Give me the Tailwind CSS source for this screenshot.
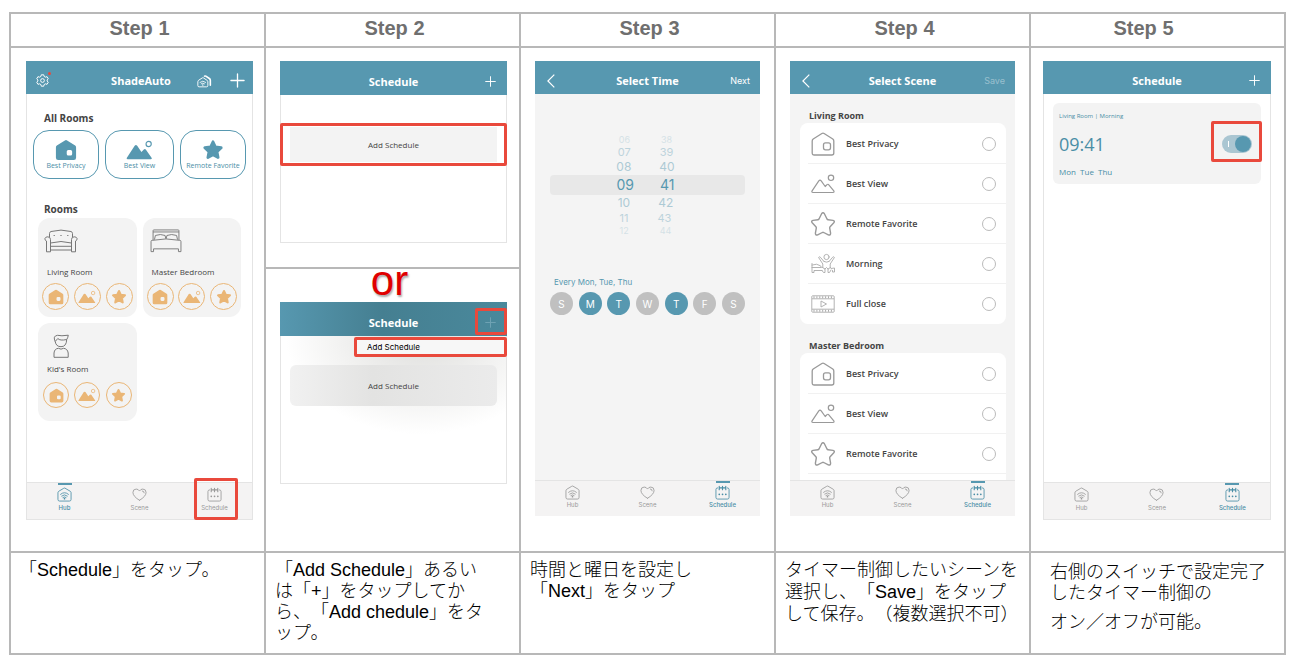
<!DOCTYPE html>
<html lang="ja">
<head>
    <meta charset="UTF-8">
    <meta name="viewport" content="width=device-width, initial-scale=1.0">
    <title>ShadeAuto - Schedule</title>
    <script src="https://cdn.jsdelivr.net/npm/@tailwindcss/browser@4"></script>
</head>
<body class="bg-white font-['Open_Sans','Noto_Sans_CJK_JP',sans-serif]">
    <!-- Icons -->
    <svg class="hidden">
        <symbol id="privacy" viewBox="0 0 24 24">
            <path fill="currentColor" fill-rule="evenodd" d="M10.800 1.500Q12 .7 13.200 1.500L22 7.200Q23 8 23 9.200V20.500Q23 23 20.500 23H3.500Q1 23 1 20.500V9.200Q1 8 2 7.200ZM14.500 12Q12.800 12 12.800 13.700V16.300Q12.800 18 14.500 18H17Q18.700 18 18.700 16.300V13.700Q18.700 12 17 12Z"/>
        </symbol>
        <symbol id="view" viewBox="0 0 28 20">
            <path fill="currentColor" d="M1.600 19.500Q0 19.500 .9 18L9 5.500Q10.300 4 11.600 5.500L16 12L18.500 9.500Q19.700 8.500 20.700 9.700L26.500 18Q27.500 19.500 25.800 19.500Z"/>
            <circle cx="23.500" cy="3.800" r="2.700" fill="none" stroke="currentColor" stroke-width="1.200"/>
        </symbol>
        <symbol id="star" viewBox="0 0 24 24">
            <path fill="currentColor" stroke="currentColor" stroke-width="3" stroke-linejoin="round" d="M12 3L14.700 8.700L21 9.500L16.400 13.800L17.600 20.200L12 17.100L6.400 20.200L7.600 13.800L3 9.500L9.300 8.700Z"/>
        </symbol>
        <symbol id="privacy-line" viewBox="0 0 24 24">
            <g fill="none" stroke="currentColor" stroke-width="1.300" stroke-linejoin="round">
                <path d="M10.900 1.500Q12 .8 13.100 1.500L21.800 7Q22.800 7.800 22.800 9V21Q22.800 23 20.800 23H3.200Q1.200 23 1.200 21V9Q1.200 7.800 2.200 7Z"/>
                <rect x="12.500" y="10.800" width="7" height="7" rx="2"/>
            </g>
        </symbol>
        <symbol id="view-line" viewBox="0 0 24 24">
            <g fill="none" stroke="currentColor" stroke-width="1.200" stroke-linejoin="round">
                <path d="M2 20.500Q.3 20.500 1.100 18.800L7.800 8.800Q9 7.500 10.200 8.800L14.200 14.500L16 12.600Q17 11.800 17.800 12.800L22.800 18.800Q23.600 20.500 22 20.500Z"/>
                <circle cx="20" cy="5.800" r="2.700"/>
            </g>
        </symbol>
        <symbol id="star-line" viewBox="0 0 24 24">
            <path fill="none" stroke="currentColor" stroke-width="1.400" stroke-linejoin="round" d="M10.600 1.700Q12 -.2 13.400 1.700L16 7Q16.400 7.600 17.100 7.700L22 8.400Q24.200 9 22.800 10.800L19.100 14.800Q18.600 15.400 18.700 16.100L19.600 21.200Q19.600 23.600 17.300 22.900L12.700 20.500Q12 20.200 11.300 20.500L6.700 22.900Q4.400 23.600 4.400 21.200L5.300 16.100Q5.400 15.400 4.900 14.800L1.200 10.800Q-.2 9 2 8.400L6.900 7.700Q7.600 7.600 8 7Z"/>
        </symbol>
        <symbol id="morning" viewBox="0 0 24 24">
            <g fill="none" stroke="currentColor" stroke-width=".9" stroke-linejoin="round" stroke-linecap="round">
                <circle cx="15.500" cy="5" r="2.600"/>
                <path d="M13 9.500L9.300 5.200Q8 4.200 7.600 5.500L11.800 12V15.500M18 9.500L21.700 5.200Q23 4.200 23.400 5.500L19.200 12V15.500M13 9.500Q15.500 11 18 9.500"/>
                <path d="M1 11.500V20.500H3V18.500H11M1 13Q6 11 9.500 13.800L10.500 15.500H1M11.500 15.500L14 17V20.500H12.500L11 18.500M19.500 15.500L17 17V20.500H18.500L20 18M14 17L15.500 15.500L17 17M20 16.500L23.500 16V20H21.500V18.500"/>
            </g>
        </symbol>
        <symbol id="film" viewBox="0 0 24 24">
            <g fill="none" stroke="currentColor" stroke-width=".9" stroke-linejoin="round">
                <rect x=".8" y="3.800" width="22.400" height="16.400" rx=".8"/>
                <path d="M1 6.800H23M1 17.200H23M10 9L15.500 12L10 15Z"/>
                <path stroke-width="2" stroke-dasharray="1 1.900" d="M2.500 5.300H22.500M2.500 18.700H22.500"/>
            </g>
        </symbol>
        <symbol id="hub" viewBox="0 0 16 16">
            <g fill="none" stroke="currentColor" stroke-width=".9" stroke-linejoin="round" stroke-linecap="round">
                <path d="M7.500 1.200Q8 .9 8.500 1.200L14.200 4.600Q15 5.100 15 6V13.200Q15 15 13.200 15H2.800Q1 15 1 13.200V6Q1 5.100 1.800 4.600Z"/>
                <path d="M3.800 7.800Q8 4.200 12.200 7.800M5 9.600Q8 7 11 9.600M6.300 11.200Q8 9.800 9.700 11.200"/>
            </g>
            <circle cx="8" cy="12.400" r=".9" fill="currentColor"/>
        </symbol>
        <symbol id="heart" viewBox="0 0 16 16">
            <path fill="none" stroke="currentColor" stroke-width=".9" stroke-linecap="round" d="M8 14.200Q1 10 1 5.800Q1 2.200 4.500 2.200Q6.800 2.200 8 4.300Q9.200 2.200 11.500 2.200Q15 2.200 15 5.800Q15 10 8 14.200M11 4.200Q13 4.200 13 6.200"/>
        </symbol>
        <symbol id="calendar" viewBox="0 0 16 16">
            <g fill="none" stroke="currentColor" stroke-linecap="round">
                <path stroke-width=".9" d="M2.800 3Q1 3 1 4.800V13.200Q1 15 2.800 15H13.200Q15 15 15 13.200V4.800Q15 3 13.200 3"/>
                <path stroke-width="1.200" d="M4.500 1.500V5M8 1.500V5M11.500 1.500V5M4.500 3H11.500"/>
                <path stroke-width="1.700" d="M4.500 10H4.600M8 10H8.100M11.500 10H11.600"/>
            </g>
        </symbol>
        <symbol id="gear" viewBox="0 0 16 16">
            <g fill="none" stroke="currentColor" stroke-width="1.200" stroke-linejoin="round">
                <path d="M6.500 1H9.500L10 3L11.600 3.900L13.600 3.300L15.100 5.900L13.700 7.300V8.700L15.100 10.100L13.600 12.700L11.600 12.100L10 13L9.500 15H6.500L6 13L4.400 12.100L2.400 12.700L.9 10.100L2.300 8.700V7.300L.9 5.900L2.400 3.300L4.400 3.900L6 3Z"/>
                <circle cx="8" cy="8" r="2.300"/>
            </g>
        </symbol>
        <symbol id="homes" viewBox="0 0 18 16">
            <g fill="none" stroke="currentColor" stroke-width="1.100" stroke-linejoin="round" stroke-linecap="round">
                <path d="M6.400 4.200Q7 3.700 7.600 4.200L12.400 7.400Q13 8 13 9V13.500Q13 15 11.500 15H2.500Q1 15 1 13.500V9Q1 8 1.600 7.400Z"/>
                <path stroke-width="1.900" d="M9 2.200Q9.800 1.700 10.600 2.200L14.800 5Q16 5.900 16 7.200V13"/>
                <path stroke-width="1" d="M3.600 9.600Q7 6.600 10.400 9.600M5 11.300Q7 9.600 9 11.300"/>
            </g>
            <circle cx="7" cy="12.900" r=".9" fill="currentColor"/>
        </symbol>
        <symbol id="plus" viewBox="0 0 16 16">
            <path fill="none" stroke="currentColor" stroke-width="1.400" stroke-linecap="round" d="M8 1V15M1 8H15"/>
        </symbol>
        <symbol id="back" viewBox="0 0 8 14">
            <path fill="none" stroke="currentColor" stroke-width="1.200" d="M7.300 .6L.9 7L7.300 13.400"/>
        </symbol>
        <symbol id="sofa" viewBox="0 0 34 24">
            <g fill="none" stroke="currentColor" stroke-width="1" stroke-linejoin="round">
                <path d="M5.500 8V4.500Q5.500 3 7 2.500Q17 -.3 27 2.500Q28.500 3 28.500 4.500V8"/>
                <path d="M2.500 22.800V12Q.3 11 1 9.300Q1.800 7.700 3.800 7.800Q6.500 8 6.500 10.500V22.800ZM31.500 22.800V12Q33.700 11 33 9.300Q32.200 7.700 30.200 7.800Q27.500 8 27.500 10.500V22.800Z"/>
                <path d="M6.500 14Q17 11 27.500 14M6.500 17.300H27.500M6.500 21H27.500"/>
            </g>
            <path stroke="currentColor" stroke-width="1.200" d="M9.600 6.500H10.800M16.400 6.500H17.600M23.200 6.500H24.400"/>
        </symbol>
        <symbol id="bed" viewBox="0 0 34 26">
            <g fill="none" stroke="currentColor" stroke-width="1" stroke-linejoin="round">
                <path d="M3 12V1.800Q3 1 3.800 1H30.200Q31 1 31 1.800V12M3 3.200H31"/>
                <path d="M4.500 11.500L5.500 7Q11 5 16 7L16.800 10.500M29.500 11.500L28.500 7Q23 5 18 7L17.200 10.500"/>
                <path d="M.8 24.500V13.500Q.8 12.300 2 12.300Q17 9.200 32 12.300Q33.200 12.300 33.200 13.500V24.500H30.500V21.500H3.500V24.500Z"/>
            </g>
        </symbol>
        <symbol id="kid" viewBox="0 0 16 24">
            <g fill="none" stroke="currentColor" stroke-width="1" stroke-linejoin="round">
                <path d="M2.200 7.500Q-.5 2 4.500 1.300Q8 2.300 15.300 1.200Q14.800 4.200 13.700 5.500"/>
                <path d="M2.200 7.500Q3 12.700 8 12.700Q13.500 12.700 13.700 5.500Q7 7 4.800 4.500L2.200 7.500"/>
                <path d="M1 23.300V19Q1.500 14.600 5.500 14.300Q8 16 10.500 14.300Q14.500 14.600 15.200 19V23.300Z"/>
            </g>
        </symbol>
    </svg>

    <main class="pt-3 pb-2 pl-[9px] pr-[18px]">
        <table class="w-full table-fixed border-collapse [&_td]:border-2 [&_td]:border-[#b8b8b8] [&_td]:align-top [&_th]:border-2 [&_th]:border-[#b8b8b8]">
            <thead>
                <tr class="h-[34px] font-['Liberation_Sans',sans-serif] text-xl leading-6 text-[#6f6f6f]">
                    <th class="pl-1 pb-1">Step 1</th>
                    <th class="pl-1 pb-1">Step 2</th>
                    <th class="pl-1 pb-1">Step 3</th>
                    <th class="pl-1 pb-1">Step 4</th>
                    <th class="pr-7 pb-1">Step 5</th>
                </tr>
            </thead>
            <tbody>
                <tr class="h-[221px]">
                    <!-- Step 1: hub screen -->
                    <td rowspan="2" class="pt-[13px] pl-[15px] pr-[11px]">
                        <div class="relative flex h-[459px] flex-col border border-[#e4e4e4]">
                            <header class="-mx-px -mt-px flex h-[33px] items-center bg-[#5798b0] px-2 pt-1.5 text-white">
                                <button aria-label="Settings" class="relative ml-0.5">
                                    <svg class="size-[13px]"><use href="#gear"/></svg>
                                    <span class="absolute -top-0.5 -right-0.5 size-[3px] rounded-full bg-[#e9493c]"></span>
                                </button>
                                <h2 class="flex-1 pl-9 text-center text-[11px] leading-4 font-bold">ShadeAuto</h2>
                                <button aria-label="Homes"><svg class="h-[14px] w-[15px]"><use href="#homes"/></svg></button>
                                <button aria-label="Add" class="ml-[18px]"><svg class="size-[15px]"><use href="#plus"/></svg></button>
                            </header>
                            <div class="flex-1 px-[11px] pt-4">
                                <h3 class="pl-1.5 text-[10px] leading-4 font-bold text-[#444]">All Rooms</h3>
                                <div class="-mx-[5px] mt-1 grid grid-cols-[67fr_70fr_67fr] gap-1.5 text-[7px] leading-[10px] text-[#4a8ea6]">
                                    <button class="flex h-[49px] flex-col items-center justify-center rounded-2xl border border-[#5798b0]">
                                        <svg class="h-[22px] w-6 text-[#5798b0]"><use href="#privacy"/></svg>
                                        <span>Best Privacy</span>
                                    </button>
                                    <button class="flex h-[49px] flex-col items-center justify-center rounded-2xl border border-[#5798b0]">
                                        <svg class="h-[22px] w-[27px] text-[#5798b0]"><use href="#view"/></svg>
                                        <span>Best View</span>
                                    </button>
                                    <button class="flex h-[49px] flex-col items-center justify-center rounded-2xl border border-[#5798b0]">
                                        <svg class="h-[22px] w-6 text-[#5798b0]"><use href="#star"/></svg>
                                        <span class="whitespace-nowrap">Remote Favorite</span>
                                    </button>
                                </div>
                                <h3 class="mt-[22px] pl-1.5 text-[10px] leading-4 font-bold text-[#444]">Rooms</h3>
                                <div class="mt-px grid grid-cols-2 gap-1.5 text-[8px] leading-3 font-medium text-[#444]">
                                    <section class="h-[99px] rounded-xl bg-[#f3f3f3] px-1 pt-[11px]">
                                        <svg class="ml-0.5 h-6 w-[34px] text-[#777]"><use href="#sofa"/></svg>
                                        <h4 class="mt-[13px] pl-[5px]">Living Room</h4>
                                        <div class="mt-[5px] flex justify-between text-[#eab676]">
                                            <button aria-label="Best Privacy" class="grid size-[27px] place-items-center rounded-full border border-current"><svg class="size-4"><use href="#privacy"/></svg></button>
                                            <button aria-label="Best View" class="grid size-[27px] place-items-center rounded-full border border-current"><svg class="size-[18px]"><use href="#view"/></svg></button>
                                            <button aria-label="Remote Favorite" class="grid size-[27px] place-items-center rounded-full border border-current"><svg class="size-4"><use href="#star"/></svg></button>
                                        </div>
                                    </section>
                                    <section class="h-[99px] rounded-xl bg-[#f3f3f3] px-1 pt-[11px]">
                                        <svg class="ml-0.5 h-6 w-[34px] text-[#777]"><use href="#bed"/></svg>
                                        <h4 class="mt-[13px] pl-[5px]">Master Bedroom</h4>
                                        <div class="mt-[5px] flex justify-between text-[#eab676]">
                                            <button aria-label="Best Privacy" class="grid size-[27px] place-items-center rounded-full border border-current"><svg class="size-4"><use href="#privacy"/></svg></button>
                                            <button aria-label="Best View" class="grid size-[27px] place-items-center rounded-full border border-current"><svg class="size-[18px]"><use href="#view"/></svg></button>
                                            <button aria-label="Remote Favorite" class="grid size-[27px] place-items-center rounded-full border border-current"><svg class="size-4"><use href="#star"/></svg></button>
                                        </div>
                                    </section>
                                    <section class="h-[98px] rounded-xl bg-[#f3f3f3] px-[5px] pt-[11px]">
                                        <svg class="ml-2.5 h-6 w-4 text-[#777]"><use href="#kid"/></svg>
                                        <h4 class="mt-[5px] pl-1">Kid's Room</h4>
                                        <div class="mt-[7px] flex justify-between text-[#eab676]">
                                            <button aria-label="Best Privacy" class="grid size-[26px] place-items-center rounded-full border border-current"><svg class="size-[15px]"><use href="#privacy"/></svg></button>
                                            <button aria-label="Best View" class="grid size-[26px] place-items-center rounded-full border border-current"><svg class="size-[18px]"><use href="#view"/></svg></button>
                                            <button aria-label="Remote Favorite" class="grid size-[26px] place-items-center rounded-full border border-current"><svg class="size-[15px]"><use href="#star"/></svg></button>
                                        </div>
                                    </section>
                                </div>
                            </div>
                            <nav class="grid h-[37px] grid-cols-3 border-t border-[#e4e4e4] bg-[#f4f3f3] font-['Inter',sans-serif] text-[6px] leading-2 text-[#999]">
                                <a href="#" class="flex flex-col items-center text-[#4a8ea6]"><span class="h-0.5 w-3.5 bg-[#5798b0]"></span><svg class="mt-0.5 size-[15px]"><use href="#hub"/></svg><span class="mt-0.5 font-medium">Hub</span></a>
                                <a href="#" class="flex flex-col items-center"><span class="h-0.5"></span><svg class="mt-0.5 size-[15px]"><use href="#heart"/></svg><span class="mt-0.5">Scene</span></a>
                                <a href="#" class="flex flex-col items-center"><span class="h-0.5"></span><svg class="mt-0.5 size-[15px]"><use href="#calendar"/></svg><span class="mt-0.5">Schedule</span></a>
                            </nav>
                            <span class="absolute -bottom-px right-[14px] h-[42px] w-11 rounded-xs border-3 border-[#e9493c]"></span>
                        </div>
                    </td>

                    <!-- Step 2: empty schedule list -->
                    <td class="pt-[13px] pl-[14px] pr-3">
                        <div class="h-[182px] border border-[#e4e4e4]">
                            <header class="-mx-px -mt-px grid h-[34px] grid-cols-[1fr_auto_1fr] items-center bg-[#5798b0] px-[11px] pt-[7px] text-white">
                                <span></span>
                                <h2 class="text-[11px] leading-4 font-bold">Schedule</h2>
                                <button aria-label="Add" class="justify-self-end"><svg class="size-[11px]"><use href="#plus"/></svg></button>
                            </header>
                            <div class="-mx-px mt-7 flex h-[43px] rounded-xs border-3 border-[#e9493c] px-[7px] py-px">
                                <button class="flex-1 bg-[#f3f3f3] text-[8px] leading-3 font-medium text-[#444]">Add Schedule</button>
                            </div>
                        </div>
                    </td>

                    <!-- Step 3: time picker -->
                    <td rowspan="2" class="px-[14px] pt-[13px]">
                        <div class="flex h-[455px] flex-col bg-[#f4f4f4]">
                            <header class="grid h-[33px] grid-cols-[1fr_auto_1fr] items-center bg-[#5798b0] px-2.5 pt-1.5 text-white">
                                <button aria-label="Back" class="pl-0.5"><svg class="h-[14px] w-2"><use href="#back"/></svg></button>
                                <h2 class="text-[11px] leading-4 font-bold">Select Time</h2>
                                <button class="justify-self-end font-['Inter',sans-serif] text-[9px] leading-4">Next</button>
                            </header>
                            <div class="flex-1 px-[15px] pt-10">
                                <div class="grid font-['Inter',sans-serif] text-[#5798b0]">
                                    <div class="flex h-[11px] items-center justify-center gap-[31px] pr-1 text-[9px] leading-3 opacity-20"><span>06</span><span>38</span></div>
                                    <div class="flex h-[14px] items-center justify-center gap-[29px] pr-1 text-[11px] leading-3 opacity-35"><span>07</span><span>39</span></div>
                                    <div class="flex h-4 items-center justify-center gap-7 pr-1 text-xs leading-4 opacity-45"><span>08</span><span>40</span></div>
                                    <div class="flex h-5 items-center justify-center gap-[26px] rounded bg-[#e8e8e8] pr-1 text-sm leading-5"><span>09</span><span>41</span></div>
                                    <div class="flex h-4 items-center justify-center gap-7 pr-1 text-xs leading-4 opacity-45"><span>10</span><span>42</span></div>
                                    <div class="flex h-[14px] items-center justify-center gap-[29px] pr-1 text-[11px] leading-3 opacity-35"><span>11</span><span>43</span></div>
                                    <div class="flex h-[11px] items-center justify-center gap-[31px] pr-1 text-[9px] leading-3 opacity-20"><span>12</span><span>44</span></div>
                                </div>
                                <p class="mt-10 pl-1 font-['Inter',sans-serif] text-[8px] leading-3 text-[#5798b0]">Every Mon, Tue, Thu</p>
                                <div class="mt-1 flex justify-between font-['Inter',sans-serif] text-[10px] leading-3 text-white">
                                    <button class="size-[23px] rounded-full bg-[#c0c0c0]">S</button>
                                    <button class="size-[23px] rounded-full bg-[#5798b0]">M</button>
                                    <button class="size-[23px] rounded-full bg-[#5798b0]">T</button>
                                    <button class="size-[23px] rounded-full bg-[#c0c0c0]">W</button>
                                    <button class="size-[23px] rounded-full bg-[#5798b0]">T</button>
                                    <button class="size-[23px] rounded-full bg-[#c0c0c0]">F</button>
                                    <button class="size-[23px] rounded-full bg-[#c0c0c0]">S</button>
                                </div>
                            </div>
                            <nav class="grid h-9 grid-cols-3 border-t border-[#e4e4e4] bg-[#f4f3f3] font-['Inter',sans-serif] text-[6px] leading-2 text-[#999]">
                                <a href="#" class="flex flex-col items-center"><span class="h-0.5"></span><svg class="mt-0.5 size-[15px]"><use href="#hub"/></svg><span class="mt-px">Hub</span></a>
                                <a href="#" class="flex flex-col items-center"><span class="h-0.5"></span><svg class="mt-0.5 size-[15px]"><use href="#heart"/></svg><span class="mt-px">Scene</span></a>
                                <a href="#" class="flex flex-col items-center text-[#4a8ea6]"><span class="h-0.5 w-3.5 bg-[#5798b0]"></span><svg class="mt-0.5 size-[15px]"><use href="#calendar"/></svg><span class="mt-px font-medium">Schedule</span></a>
                            </nav>
                        </div>
                    </td>

                    <!-- Step 4: scene picker -->
                    <td rowspan="2" class="px-[14px] pt-[13px]">
                        <div class="flex h-[455px] flex-col bg-[#f4f4f4]">
                            <header class="grid h-[33px] shrink-0 grid-cols-[1fr_auto_1fr] items-center bg-[#5798b0] px-2.5 pt-1.5 text-white">
                                <button aria-label="Back" class="pl-0.5"><svg class="h-[14px] w-2"><use href="#back"/></svg></button>
                                <h2 class="text-[11px] leading-4 font-bold">Select Scene</h2>
                                <button disabled class="justify-self-end font-['Inter',sans-serif] text-[9px] leading-4 text-white/40">Save</button>
                            </header>
                            <div class="min-h-0 flex-1 overflow-hidden pt-[15px] pr-[9px] pl-2.5 text-[#444]">
                                <h3 class="pl-[9px] text-[9px] leading-[14px] font-bold">Living Room</h3>
                                <div class="divide-y divide-[#f1f1f1] rounded-lg bg-white pt-px pl-2 text-[9px] leading-4 font-semibold">
                                    <label class="flex h-10 items-center pr-2.5 pl-[3px]"><svg class="mr-[11px] size-6 text-[#999]"><use href="#privacy-line"/></svg><span class="flex-1">Best Privacy</span><input type="radio" name="scene" class="size-3.5 appearance-none rounded-full border border-[#bbb] bg-white"></label>
                                    <label class="flex h-10 items-center pr-2.5 pl-[3px]"><svg class="mr-[11px] size-6 text-[#999]"><use href="#view-line"/></svg><span class="flex-1">Best View</span><input type="radio" name="scene" class="size-3.5 appearance-none rounded-full border border-[#bbb] bg-white"></label>
                                    <label class="flex h-10 items-center pr-2.5 pl-[3px]"><svg class="mr-[11px] size-6 text-[#999]"><use href="#star-line"/></svg><span class="flex-1">Remote Favorite</span><input type="radio" name="scene" class="size-3.5 appearance-none rounded-full border border-[#bbb] bg-white"></label>
                                    <label class="flex h-10 items-center pr-2.5 pl-[3px]"><svg class="mr-[11px] size-6 text-[#aaa]"><use href="#morning"/></svg><span class="flex-1">Morning</span><input type="radio" name="scene" class="size-3.5 appearance-none rounded-full border border-[#bbb] bg-white"></label>
                                    <label class="flex h-10 items-center pr-2.5 pl-[3px]"><svg class="mr-[11px] size-6 text-[#aaa]"><use href="#film"/></svg><span class="flex-1">Full close</span><input type="radio" name="scene" class="size-3.5 appearance-none rounded-full border border-[#bbb] bg-white"></label>
                                </div>
                                <h3 class="mt-[15px] pl-[9px] text-[9px] leading-[14px] font-bold">Master Bedroom</h3>
                                <div class="divide-y divide-[#f1f1f1] rounded-t-lg bg-white pt-px pl-2 text-[9px] leading-4 font-semibold">
                                    <label class="flex h-10 items-center pr-2.5 pl-[3px]"><svg class="mr-[11px] size-6 text-[#999]"><use href="#privacy-line"/></svg><span class="flex-1">Best Privacy</span><input type="radio" name="scene" class="size-3.5 appearance-none rounded-full border border-[#bbb] bg-white"></label>
                                    <label class="flex h-10 items-center pr-2.5 pl-[3px]"><svg class="mr-[11px] size-6 text-[#999]"><use href="#view-line"/></svg><span class="flex-1">Best View</span><input type="radio" name="scene" class="size-3.5 appearance-none rounded-full border border-[#bbb] bg-white"></label>
                                    <label class="flex h-10 items-center pr-2.5 pl-[3px]"><svg class="mr-[11px] size-6 text-[#999]"><use href="#star-line"/></svg><span class="flex-1">Remote Favorite</span><input type="radio" name="scene" class="size-3.5 appearance-none rounded-full border border-[#bbb] bg-white"></label>
                                    <div class="h-10"></div>
                                </div>
                            </div>
                            <nav class="grid h-9 shrink-0 grid-cols-3 border-t border-[#e4e4e4] bg-[#f4f3f3] font-['Inter',sans-serif] text-[6px] leading-2 text-[#999]">
                                <a href="#" class="flex flex-col items-center"><span class="h-0.5"></span><svg class="mt-0.5 size-[15px]"><use href="#hub"/></svg><span class="mt-px">Hub</span></a>
                                <a href="#" class="flex flex-col items-center"><span class="h-0.5"></span><svg class="mt-0.5 size-[15px]"><use href="#heart"/></svg><span class="mt-px">Scene</span></a>
                                <a href="#" class="flex flex-col items-center text-[#4a8ea6]"><span class="h-0.5 w-3.5 bg-[#5798b0]"></span><svg class="mt-0.5 size-[15px]"><use href="#calendar"/></svg><span class="mt-px font-medium">Schedule</span></a>
                            </nav>
                        </div>
                    </td>

                    <!-- Step 5: saved schedule -->
                    <td rowspan="2" class="pt-[13px] pr-[13px] pl-3">
                        <div class="flex h-[459px] flex-col border border-[#e4e4e4]">
                            <header class="-mx-px -mt-px grid h-[33px] grid-cols-[1fr_auto_1fr] items-center bg-[#5798b0] px-[11px] pt-1.5 text-white">
                                <span></span>
                                <h2 class="text-[11px] leading-4 font-bold">Schedule</h2>
                                <button aria-label="Add" class="justify-self-end"><svg class="size-[11px]"><use href="#plus"/></svg></button>
                            </header>
                            <div class="flex-1 px-[9px] pt-[9px]">
                                <section class="relative flex h-[81px] items-center justify-between rounded-md bg-[#f3f3f3] pr-[9px] pl-1.5 text-[#4a8ea6]">
                                    <div>
                                        <p class="text-[6px] leading-3 font-medium">Living Room | Morning</p>
                                        <p class="my-2 text-lg leading-7">09:41</p>
                                        <p class="text-[8px] leading-3 whitespace-pre">Mon  Tue  Thu</p>
                                    </div>
                                    <input type="checkbox" checked role="switch" aria-label="Schedule on" class="relative h-[18px] w-[30px] appearance-none rounded-full bg-[#aac6d2] before:absolute before:top-[6px] before:left-[6px] before:h-1.5 before:w-px before:bg-white after:absolute after:top-px after:right-px after:size-4 after:rounded-full after:bg-[#5798b0]">
                                    <span class="pointer-events-none absolute -right-px top-[18px] h-[41px] w-[51px] rounded-xs border-3 border-[#e9493c]"></span>
                                </section>
                            </div>
                            <nav class="grid h-[37px] grid-cols-3 border-t border-[#e4e4e4] bg-[#f4f3f3] font-['Inter',sans-serif] text-[6px] leading-2 text-[#999]">
                                <a href="#" class="flex flex-col items-center"><span class="h-0.5"></span><svg class="mt-0.5 size-[15px]"><use href="#hub"/></svg><span class="mt-0.5">Hub</span></a>
                                <a href="#" class="flex flex-col items-center"><span class="h-0.5"></span><svg class="mt-0.5 size-[15px]"><use href="#heart"/></svg><span class="mt-0.5">Scene</span></a>
                                <a href="#" class="flex flex-col items-center text-[#4a8ea6]"><span class="h-0.5 w-3.5 bg-[#5798b0]"></span><svg class="mt-0.5 size-[15px]"><use href="#calendar"/></svg><span class="mt-0.5 font-medium">Schedule</span></a>
                            </nav>
                        </div>
                    </td>
                </tr>
                <tr class="h-[284px]">
                    <!-- Step 2: menu under the plus button -->
                    <td class="pl-[14px] pr-3">
                        <p class="h-[33px] pr-2 text-center font-['Liberation_Sans',sans-serif] text-[42px] leading-6 text-[#e00000] text-shadow-[1px_2px_2px_#0005]">or</p>
                        <div class="relative h-[182px] border border-[#e4e4e4] bg-radial-[ellipse_60%_55%_at_62%_18%] from-[#dededc] via-[#f2f2f1] via-60% to-white">
                            <header class="-mx-px -mt-px grid h-[34px] grid-cols-[1fr_auto_1fr] items-center bg-linear-to-r from-[#5798b0] via-[#457f91] via-45% to-[#4a899c] px-[11px] pt-[7px] text-white">
                                <span></span>
                                <h2 class="text-[11px] leading-4 font-bold">Schedule</h2>
                                <button aria-label="Add" class="justify-self-end text-[#6fa3b4]"><svg class="size-[11px]"><use href="#plus"/></svg></button>
                            </header>
                            <button class="absolute top-[34px] -right-px h-5 w-[153px] rounded-xs border-3 border-[#e9493c] bg-[#f7f7f7] pl-2.5 text-left font-['Inter',sans-serif] text-[8px] leading-3 text-black">Add Schedule</button>
                            <button class="mx-[9px] mt-[29px] block h-[41px] w-[calc(100%-18px)] rounded-md bg-linear-to-r from-[#f1f1f1] via-[#e3e3e2] via-40% to-[#ebebeb] text-[8px] leading-3 font-medium text-[#444]">Add Schedule</button>
                            <span class="pointer-events-none absolute top-[5px] -right-px h-[27px] w-8 rounded-xs border-3 border-[#e9493c]"></span>
                        </div>
                    </td>
                </tr>
                <!-- Captions -->
                <tr class="h-[102px] font-['Liberation_Sans','Noto_Sans_CJK_JP',sans-serif] text-lg leading-[21px] font-light whitespace-nowrap text-black [text-spacing-trim:space-all]">
                    <td class="pt-[7px] pl-2">「Schedule」をタップ。</td>
                    <td class="pt-[7px] pl-[9px]">「Add Schedule」あるい<br>は「+」をタップしてか<br>ら、「Add chedule」をタ<br>ップ。</td>
                    <td class="pt-[7px] pl-[9px]">時間と曜日を設定し<br>「Next」をタップ</td>
                    <td class="pt-1.5 pl-[9px] leading-[22px]">タイマー制御したいシーンを<br>選択し、「Save」をタップ<br>して保存。（複数選択不可）</td>
                    <td class="pt-[9px] pl-[19px]">
                        <p>右側のスイッチで設定完了<br>したタイマー制御の</p>
                        <p class="mt-2">オン／オフが可能。</p>
                    </td>
                </tr>
            </tbody>
        </table>
    </main>
</body>
</html>
